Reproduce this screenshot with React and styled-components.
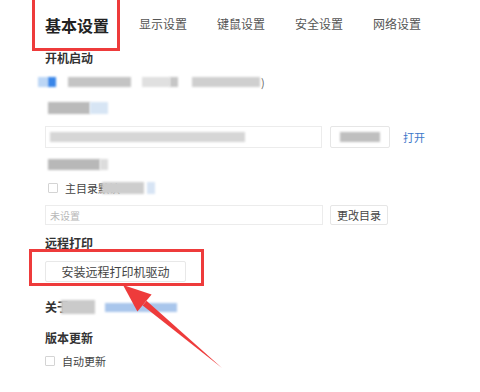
import React from "react";
import styled, { createGlobalStyle } from "styled-components";

const Global = createGlobalStyle`
  html, body {
    margin: 0;
    padding: 0;
    background: #ffffff;
  }
  body {
    font-family: "Noto Sans CJK SC", "Noto Sans", sans-serif;
    color: #333333;
  }
`;

const Page = styled.div`
  position: relative;
  width: 480px;
  height: 392px;
  overflow: hidden;
  background: #ffffff;
`;

const Content = styled.div`
  display: flex;
  flex-direction: column;
  padding-left: 45px;
`;

const TabBar = styled.div`
  display: flex;
  align-items: center;
  height: 48px;
  gap: 30px;
`;

const Tab = styled.div`
  position: relative;
  font-size: ${(p) => (p.$active ? "16px" : "12px")};
  font-weight: ${(p) => (p.$active ? 700 : 400)};
  color: ${(p) => (p.$active ? "#222222" : "#555555")};
  line-height: 20px;
  white-space: nowrap;
  ${(p) =>
    p.$active &&
    `
    margin-top: 2px;
    &::after {
      content: "";
      position: absolute;
      left: -13px;
      right: -11px;
      top: -18px;
      bottom: -16px;
      border: 3px solid #ee3b3b;
    }
  `}
`;

const Label = styled.div`
  font-size: 12px;
  font-weight: 600;
  line-height: 16px;
  color: #333333;
  margin-top: ${(p) => p.$mt || 0}px;
`;

const Row = styled.div`
  display: flex;
  align-items: center;
  height: ${(p) => p.$h || 14}px;
  margin-top: ${(p) => p.$mt || 0}px;
  gap: ${(p) => p.$gap || 0}px;
`;

const Blur = styled.div`
  width: ${(p) => p.$w}px;
  height: ${(p) => p.$h || 10}px;
  margin-left: ${(p) => p.$ml || 0}px;
  background: ${(p) => p.$c || "#c4c4c4"};
  filter: blur(1.3px);
  flex-shrink: 0;
`;

const FieldBox = styled.div`
  display: flex;
  align-items: center;
  box-sizing: border-box;
  width: ${(p) => p.$w}px;
  height: ${(p) => p.$h}px;
  border: 1px solid #ececec;
  background: #ffffff;
  padding-left: 4px;
  font-size: 10px;
  color: #b8b8b8;
`;

const SmallButton = styled.div`
  display: flex;
  align-items: center;
  justify-content: center;
  box-sizing: border-box;
  width: ${(p) => p.$w}px;
  height: ${(p) => p.$h}px;
  border: 1px solid #e6e6e6;
  border-radius: 2px;
  font-size: 11px;
  color: #444444;
  background: #ffffff;
`;

const Link = styled.span`
  font-size: 11px;
  color: #3d78c9;
  margin-left: 5px;
`;

const Check = styled.span`
  display: inline-block;
  box-sizing: border-box;
  width: 10px;
  height: 10px;
  border: 1px solid #d4d4d4;
  border-radius: 1px;
  background: #ffffff;
  flex-shrink: 0;
`;

const CheckText = styled.span`
  font-size: 11px;
  color: #444444;
  margin-left: 7px;
  white-space: nowrap;
`;

const ActionButton = styled.div`
  position: relative;
  display: flex;
  align-items: center;
  justify-content: center;
  box-sizing: border-box;
  width: 141px;
  height: 21px;
  margin-top: ${(p) => p.$mt || 0}px;
  border: 1px solid #e8e8e8;
  border-radius: 2px;
  font-size: 12px;
  color: #444444;
  &::after {
    content: "";
    position: absolute;
    left: -17px;
    right: -19px;
    top: -13px;
    bottom: -5px;
    border: 3px solid #ee3b3b;
  }
`;

const Overlay = styled.svg`
  position: absolute;
  left: 0;
  top: 0;
  pointer-events: none;
`;

function Arrow() {
  // tail (222,368) -> tip (123,285)
  return (
    <Overlay width="480" height="392" viewBox="0 0 480 392">
      <polygon points="222,368 146.5,300.8 142.7,305.4" fill="#ee3b3b" />
      <polygon points="123,285 151.6,294.6 137.4,311.4" fill="#ee3b3b" />
    </Overlay>
  );
}

export default function App() {
  return (
    <Page>
      <Global />
      <Content>
        <TabBar>
          <Tab $active>基本设置</Tab>
          <Tab>显示设置</Tab>
          <Tab>键鼠设置</Tab>
          <Tab>安全设置</Tab>
          <Tab>网络设置</Tab>
        </TabBar>

        <Label $mt={2}>开机启动</Label>

        <Row $h={10} $mt={11}>
          <Blur $w={10} $c="#bcd6f5" $ml={-7} />
          <Blur $w={8} $c="#3a86e8" />
          <Blur $w={63} $c="#c4c4c4" $ml={12} />
          <Blur $w={28} $c="#e0e0e0" $ml={11} />
          <Blur $w={8} $c="#c6c6c6" />
          <Blur $w={68} $c="#cfcfcf" $ml={14} />
          <CheckText style={{ marginLeft: 1, color: "#666" }}>)</CheckText>
        </Row>

        <Row $h={16} $mt={13}>
          <Blur $w={42} $h={12} $c="#bababa" $ml={3} />
          <Blur $w={18} $h={12} $c="#d7e5f4" />
        </Row>

        <Row $h={22} $mt={10} $gap={8}>
          <FieldBox $w={277} $h={22}>
            <Blur $w={195} $c="#d6d6d6" />
          </FieldBox>
          <SmallButton $w={60} $h={22}>
            <Blur $w={40} $c="#bfbfbf" />
          </SmallButton>
          <Link>打开</Link>
        </Row>

        <Row $h={12} $mt={10}>
          <Blur $w={52} $h={11} $c="#b8b8b8" $ml={3} />
          <Blur $w={8} $h={11} $c="#dcdcdc" />
        </Row>

        <Row $h={14} $mt={11}>
          <Check style={{ marginLeft: 3 }} />
          <CheckText>主目录默认</CheckText>
          <Blur $w={42} $h={12} $c="#cdcdcd" $ml={-18} />
          <Blur $w={8} $h={12} $c="#d7e4f4" $ml={3} />
        </Row>

        <Row $h={20} $mt={10} $gap={7}>
          <FieldBox $w={278} $h={20}>未设置</FieldBox>
          <SmallButton $w={58} $h={20}>更改目录</SmallButton>
        </Row>

        <Label $mt={10}>远程打印</Label>

        <ActionButton $mt={10}>安装远程打印机驱动</ActionButton>

        <Row $h={16} $mt={17}>
          <Label>关于</Label>
          <Blur $w={34} $h={14} $c="#cacaca" $ml={-8} />
          <Blur $w={72} $h={9} $c="#a9c6ec" $ml={10} />
        </Row>

        <Label $mt={15}>版本更新</Label>

        <Row $h={14} $mt={8}>
          <Check />
          <CheckText>自动更新</CheckText>
        </Row>
      </Content>
      <Arrow />
    </Page>
  );
}
